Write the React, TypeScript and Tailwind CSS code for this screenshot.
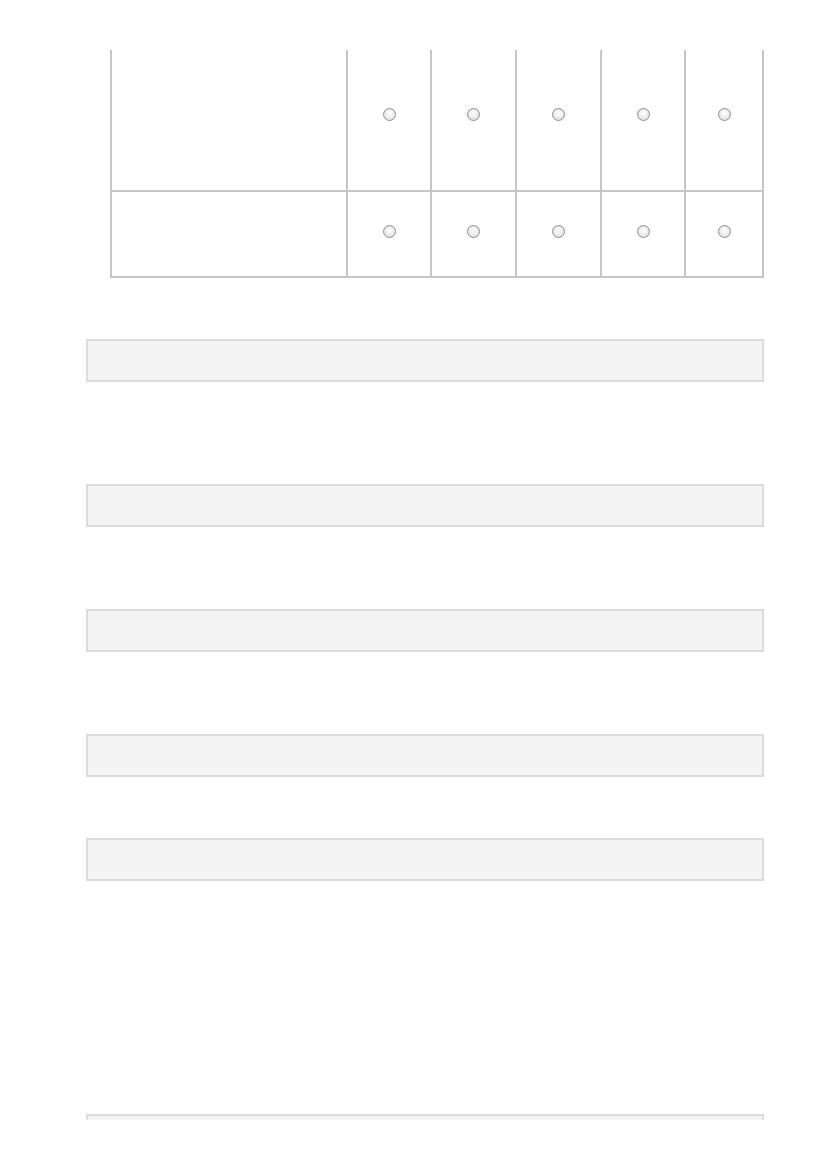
import React from "react";

function Radio() {
  return (
    <span className="block w-[13px] h-[13px] rounded-full border border-[#8e8e8e] bg-[radial-gradient(circle_at_50%_40%,#ffffff_0%,#ececec_50%,#c4c4c4_100%)] shadow-[inset_0_0_0_1px_#e6e6e6]" />
  );
}

const widths = ["w-[84px]", "w-[85px]", "w-[85px]", "w-[84px]", "w-[78px]"];

function Row({ h, pt }: { h: string; pt: string }) {
  return (
    <div className={`flex ${h}`}>
      <div className="w-[236px] border-r-2 border-b-2 border-[#c6c6c6]" />
      {widths.map((w, i) => (
        <div key={i} className={`${w} border-r-2 border-b-2 border-[#c6c6c6] flex justify-center ${pt}`}>
          <Radio />
        </div>
      ))}
    </div>
  );
}

function Box({ mt }: { mt: string }) {
  return <div className={`${mt} ml-[86px] w-[678px] h-[43px] border-2 border-[#dcdcdc] bg-[#f4f4f4]`} />;
}

export default function App() {
  return (
    <div className="w-[827px] h-[1120px] overflow-hidden bg-white font-['Liberation_Sans',sans-serif]">
      <div className="pt-[50px] ml-[110px] w-[654px]">
        <div className="border-l-2 border-[#c6c6c6]">
          <Row h="h-[142px]" pt="pt-[58px]" />
          <Row h="h-[86px]" pt="pt-[33px]" />
        </div>
      </div>
      <Box mt="mt-[61px]" />
      <Box mt="mt-[102px]" />
      <Box mt="mt-[82px]" />
      <Box mt="mt-[82px]" />
      <Box mt="mt-[61px]" />
      <Box mt="mt-[233px]" />
    </div>
  );
}
